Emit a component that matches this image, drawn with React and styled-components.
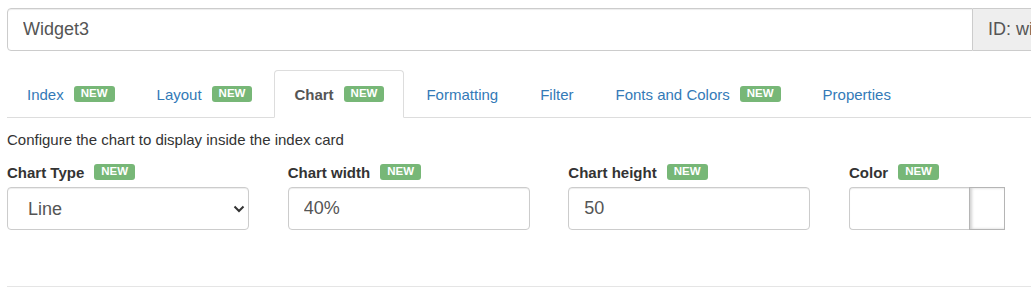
import styled, { createGlobalStyle } from "styled-components";

const GlobalStyle = createGlobalStyle`
  body {
    margin: 0;
    font-family: "Liberation Sans", Arial, sans-serif;
    font-size: 15px;
    color: #333;
    background: #fff;
    overflow: hidden;
  }
`;

const Page = styled.div`
  width: 1031px;
  height: 294px;
  box-sizing: border-box;
  padding: 8px 0 0 7px;
  overflow: hidden;
`;

const TopGroup = styled.div`
  display: flex;
  width: 1130px;
  height: 43px;
`;

const NameInput = styled.input`
  flex: 0 0 966px;
  box-sizing: border-box;
  height: 43px;
  padding: 0 15px;
  border: 1px solid #ccc;
  border-radius: 4px 0 0 4px;
  box-shadow: inset 0 1px 1px rgba(0, 0, 0, 0.075);
  font-family: inherit;
  font-size: 18px;
  color: #555;
  outline: none;
`;

const Addon = styled.div`
  flex: 1;
  display: flex;
  align-items: center;
  box-sizing: border-box;
  padding: 0 15px;
  border: 1px solid #ccc;
  border-left: 0;
  background: #eee;
  font-size: 18px;
  color: #555;
  white-space: nowrap;
`;

const Tabs = styled.ul`
  display: flex;
  margin: 19px 0 0;
  padding: 0;
  list-style: none;
  height: 47px;
  border-bottom: 1px solid #ddd;
`;

const Tab = styled.li`
  display: flex;
  align-items: center;
  gap: 10px;
  box-sizing: border-box;
  height: 48px;
  margin: 0 2px -1px 0;
  padding: 0 19px;
  border: 1px solid transparent;
  border-radius: 4px 4px 0 0;
  color: #337ab7;
  white-space: nowrap;
  cursor: pointer;

  ${(p) =>
    p.$active &&
    `
    border-color: #ddd #ddd transparent;
    background: #fff;
    color: #555;
    font-weight: bold;
  `}
`;

const Badge = styled.span`
  display: inline-flex;
  align-items: center;
  justify-content: center;
  box-sizing: border-box;
  height: 16px;
  padding: 0 7px;
  min-width: 40px;
  border-radius: 3px;
  background: #77b777;
  color: #fff;
  font-size: 11.5px;
  font-weight: bold;
  line-height: 1;
`;

const Description = styled.p`
  margin: 12px 0 0;
  line-height: 20px;
`;

const Fields = styled.div`
  display: grid;
  grid-template-columns: repeat(4, 242px);
  column-gap: 38.67px;
  margin-top: 12px;
`;

const Field = styled.div`
  display: flex;
  flex-direction: column;
`;

const FieldLabel = styled.label`
  display: flex;
  align-items: center;
  gap: 10px;
  height: 20px;
  margin-bottom: 5px;
  font-weight: bold;
  color: #333;
`;

const TextInput = styled.input`
  box-sizing: border-box;
  width: 100%;
  height: 43px;
  padding: 0 15px;
  border: 1px solid #ccc;
  border-radius: 4px;
  box-shadow: inset 0 1px 1px rgba(0, 0, 0, 0.075);
  font-family: inherit;
  font-size: 18px;
  color: #555;
  outline: none;
`;

const SelectWrap = styled.div`
  position: relative;
`;

const Select = styled.select`
  appearance: none;
  box-sizing: border-box;
  width: 100%;
  height: 43px;
  padding: 0 20px;
  border: 1px solid #ccc;
  border-radius: 4px;
  background: #fff;
  box-shadow: inset 0 1px 1px rgba(0, 0, 0, 0.075);
  font-family: inherit;
  font-size: 18px;
  color: #555;
  outline: none;
`;

const Chevron = styled.svg`
  position: absolute;
  right: 4px;
  top: 18px;
  pointer-events: none;
`;

const ColorGroup = styled.div`
  display: flex;
  width: 156px;
  height: 43px;
`;

const ColorText = styled.input`
  box-sizing: border-box;
  width: 120px;
  height: 43px;
  border: 1px solid #ccc;
  border-right: 0;
  border-radius: 4px 0 0 4px;
  box-shadow: inset 0 1px 1px rgba(0, 0, 0, 0.075);
  outline: none;
`;

const Swatch = styled.div`
  box-sizing: border-box;
  width: 36px;
  height: 43px;
  border: 1px solid #b5b5b5;
  background: #fff;
  box-shadow: inset 2px 0 3px rgba(0, 0, 0, 0.18);
`;

const Divider = styled.hr`
  margin: 56px 0 0;
  border: 0;
  border-top: 1px solid #e5e5e5;
`;

const tabs = [
  { name: "Index", badge: true },
  { name: "Layout", badge: true },
  { name: "Chart", badge: true, active: true },
  { name: "Formatting" },
  { name: "Filter" },
  { name: "Fonts and Colors", badge: true },
  { name: "Properties" },
];

const App = () => {
  return (
    <Page>
      <GlobalStyle />
      <TopGroup>
        <NameInput defaultValue="Widget3" />
        <Addon>ID: widget3</Addon>
      </TopGroup>

      <Tabs>
        {tabs.map((t) => (
          <Tab key={t.name} $active={t.active}>
            {t.name}
            {t.badge && <Badge>NEW</Badge>}
          </Tab>
        ))}
      </Tabs>

      <Description>Configure the chart to display inside the index card</Description>

      <Fields>
        <Field>
          <FieldLabel>
            Chart Type <Badge>NEW</Badge>
          </FieldLabel>
          <SelectWrap>
            <Select defaultValue="line">
              <option value="line">Line</option>
              <option value="bar">Bar</option>
            </Select>
            <Chevron width="12" height="8" viewBox="0 0 12 8">
              <path d="M1.5 1.5 L6 6 L10.5 1.5" fill="none" stroke="#333" strokeWidth="2" />
            </Chevron>
          </SelectWrap>
        </Field>
        <Field>
          <FieldLabel>
            Chart width <Badge>NEW</Badge>
          </FieldLabel>
          <TextInput defaultValue="40%" />
        </Field>
        <Field>
          <FieldLabel>
            Chart height <Badge>NEW</Badge>
          </FieldLabel>
          <TextInput defaultValue="50" />
        </Field>
        <Field>
          <FieldLabel>
            Color <Badge>NEW</Badge>
          </FieldLabel>
          <ColorGroup>
            <ColorText />
            <Swatch />
          </ColorGroup>
        </Field>
      </Fields>

      <Divider />
    </Page>
  );
};

export default App;
